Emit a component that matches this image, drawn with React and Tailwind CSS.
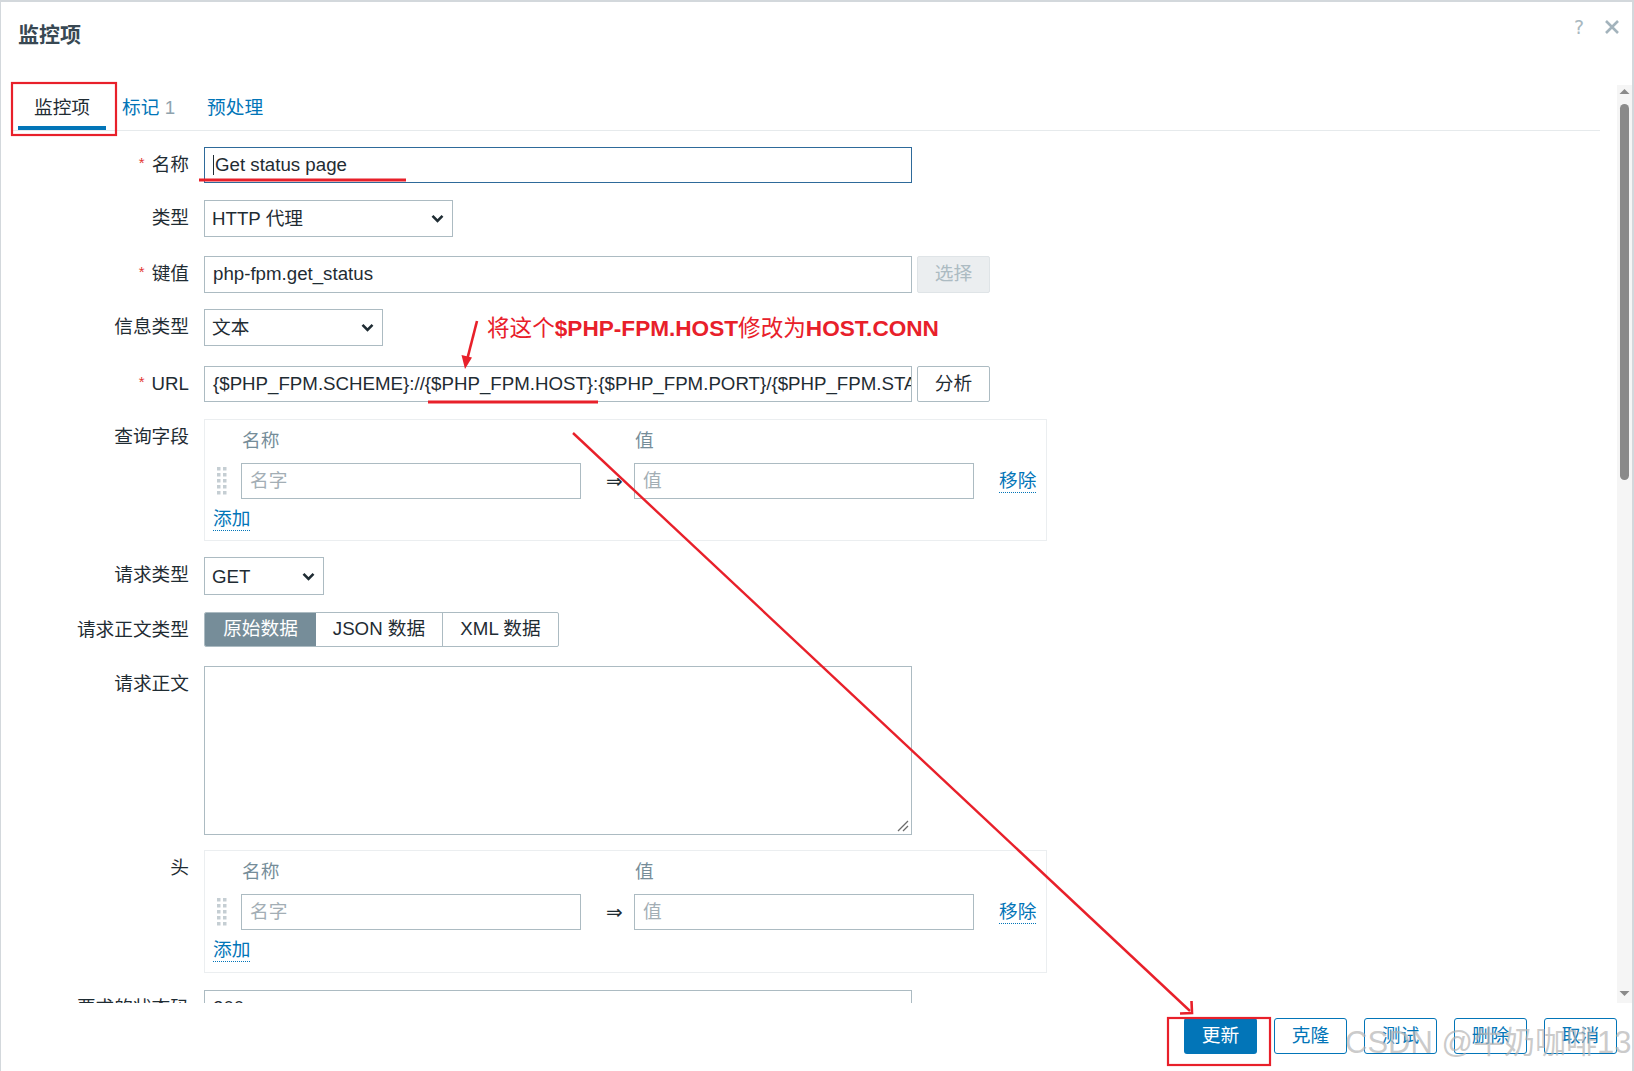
import React from "react";

const FONT = "font-['Liberation_Sans','Noto_Sans_CJK_SC',sans-serif]";

function Chevron() {
  return (
    <svg width="13" height="9" viewBox="0 0 13 9" className="shrink-0">
      <path d="M1.5 1.8 L6.5 6.8 L11.5 1.8" fill="none" stroke="#1f2c33" strokeWidth="2.6" />
    </svg>
  );
}

function Label({ children, required }) {
  return (
    <div className="w-[188px] h-[36px] flex items-center justify-end shrink-0 text-[18.7px] text-[#1f2c33] whitespace-nowrap">
      {required && <span className="text-[15px] text-[#e33734] mr-[7px] mt-[-4px]">*</span>}
      {children}
    </div>
  );
}

function Row({ label, required, mt, children }) {
  return (
    <div className={`flex items-start ${mt}`}>
      <Label required={required}>{label}</Label>
      <div className="ml-[15px]">{children}</div>
    </div>
  );
}

function Select({ w, h, text }) {
  return (
    <div className={`${w} ${h} border border-[#acbbc2] bg-white flex items-center justify-between pl-[7px] pr-[8px] text-[18.7px] text-[#1f2c33]`}>
      <span className="pt-[2px]">{text}</span>
      <Chevron />
    </div>
  );
}

function Handle() {
  const dots = [];
  for (let r = 0; r < 5; r++) {
    for (let c = 0; c < 2; c++) {
      dots.push(<rect key={`${r}-${c}`} x={c * 6} y={r * 6} width="3.5" height="3.5" fill="#c5ced3" />);
    }
  }
  return (
    <svg width="10" height="28" viewBox="0 0 10 28">
      {dots}
    </svg>
  );
}

function PairBox({ h }) {
  return (
    <div className={`w-[843px] ${h} border border-[#ebeef0] pl-[8px] pt-[10px]`}>
      <div className="flex h-[22px] leading-[22px] text-[18.7px] text-[#768d99]">
        <div className="w-[28px]" />
        <div className="w-[340px] pl-[1px]">名称</div>
        <div className="w-[53px]" />
        <div className="pl-[1px]">值</div>
      </div>
      <div className="flex items-center mt-[11px] h-[36px]">
        <div className="w-[28px] flex items-center pl-[4px]">
          <Handle />
        </div>
        <div className="w-[340px] h-[36px] border border-[#acbbc2] flex items-center pl-[8px] text-[18.7px] text-[#a3aeb5]">名字</div>
        <div className="w-[53px] text-center text-[20px] text-[#1f2c33] font-['DejaVu_Sans',sans-serif] pl-[14px]">⇒</div>
        <div className="w-[340px] h-[36px] border border-[#acbbc2] flex items-center pl-[8px] text-[18.7px] text-[#a3aeb5]">值</div>
        <div className="ml-[25px] text-[18.7px] text-[#0275b8] leading-[22px] border-b border-dotted border-[#0275b8]">移除</div>
      </div>
      <div className="mt-[9px] flex">
        <span className="text-[18.7px] text-[#0275b8] leading-[22px] border-b border-dotted border-[#0275b8]">添加</span>
      </div>
    </div>
  );
}

function Btn({ children, primary }) {
  return (
    <div
      className={`w-[73px] h-[36px] rounded-[3px] flex items-center justify-center text-[18.7px] ${
        primary ? "bg-[#0275b8] text-white" : "bg-white border border-[#0275b8] text-[#0275b8]"
      }`}
    >
      {children}
    </div>
  );
}

export default function App() {
  return (
    <div className={`${FONT} relative w-[1634px] h-[1071px] bg-white border-t-2 border-l border-r-2 border-[#d3d8dc] overflow-hidden text-[#1f2c33]`}>
      {/* header */}
      <div className="h-[83px] flex items-start justify-between">
        <div className="pl-[17px] pt-[20px] text-[21px] font-bold text-[#384853] leading-[26px]">监控项</div>
        <div className="flex items-center pt-[11px] pr-[12px] gap-[20px]">
          <span className="text-[19px] text-[#a9b8c0] font-['DejaVu_Sans',sans-serif]">?</span>
          <svg width="16" height="16" viewBox="0 0 16 16">
            <path d="M2 2 L14 14 M14 2 L2 14" stroke="#a3b3bc" strokeWidth="2.6" />
          </svg>
        </div>
      </div>

      {/* scroll body */}
      <div className="flex h-[918px]">
        <div className="flex-1 overflow-hidden pr-[17px]">
          {/* tabs */}
          <div className="ml-[10px] flex border-b border-[#e6eaec] h-[46px] items-end">
            <div className="ml-[7px] px-[16px] h-[44px] pt-[11px] text-[18.7px] leading-[22px] text-[#1f2c33] border-b-4 border-[#0275b8]">监控项</div>
            <div className="px-[16px] h-[44px] pt-[11px] text-[18.7px] leading-[22px] text-[#0275b8]">
              标记 <span className="text-[#8fa3ae]">1</span>
            </div>
            <div className="px-[16px] h-[44px] pt-[11px] text-[18.7px] leading-[22px] text-[#0275b8]">预处理</div>
          </div>

          {/* form */}
          <div className="flex flex-col">
            <Row label="名称" required mt="mt-[16px]">
              <div className="w-[708px] h-[36px] border border-[#2e6a9a] flex items-center pl-[8px] text-[18.7px]">
                <span className="w-[1px] h-[20px] bg-[#1f2c33] mr-[1px]" />
                Get status page
              </div>
            </Row>
            <Row label="类型" mt="mt-[17px]">
              <Select w="w-[249px]" h="h-[37px]" text="HTTP 代理" />
            </Row>
            <Row label="键值" required mt="mt-[19px]">
              <div className="flex items-center">
                <div className="w-[708px] h-[37px] border border-[#acbbc2] flex items-center pl-[8px] text-[18.7px]">php-fpm.get_status</div>
                <div className="ml-[5px] w-[73px] h-[37px] rounded-[2px] bg-[#ebeef0] border border-[#dfe4e7] flex items-center justify-center text-[18.7px] text-[#acbbc2]">选择</div>
              </div>
            </Row>
            <Row label="信息类型" mt="mt-[16px]">
              <Select w="w-[179px]" h="h-[37px]" text="文本" />
            </Row>
            <Row label="URL" required mt="mt-[20px]">
              <div className="flex items-center">
                <div className="w-[708px] h-[36px] border border-[#acbbc2] flex items-center pl-[8px] pr-[6px] text-[18.7px] overflow-hidden whitespace-nowrap">
                  {"{$PHP_FPM.SCHEME}://{$PHP_FPM.HOST}:{$PHP_FPM.PORT}/{$PHP_FPM.STATUS.PAGE}"}
                </div>
                <div className="ml-[5px] w-[73px] h-[36px] rounded-[2px] bg-white border border-[#acbbc2] flex items-center justify-center text-[18.7px]">分析</div>
              </div>
            </Row>
            <Row label="查询字段" mt="mt-[17px]">
              <PairBox h="h-[122px]" />
            </Row>
            <Row label="请求类型" mt="mt-[16px]">
              <Select w="w-[120px]" h="h-[38px]" text="GET" />
            </Row>
            <Row label="请求正文类型" mt="mt-[17px]">
              <div className="flex h-[35px] text-[18.7px] rounded-[2px] overflow-hidden border border-[#acbbc2]">
                <div className="w-[111px] bg-[#768d99] text-white flex items-center justify-center">原始数据</div>
                <div className="w-[127px] border-r border-[#acbbc2] flex items-center justify-center">JSON 数据</div>
                <div className="w-[115px] flex items-center justify-center">XML 数据</div>
              </div>
            </Row>
            <Row label="请求正文" mt="mt-[18px]">
              <div className="relative w-[708px] h-[169px] border border-[#acbbc2]">
                <svg className="absolute right-[2px] bottom-[2px]" width="12" height="12" viewBox="0 0 12 12">
                  <path d="M1 11 L11 1 M6 11 L11 6" stroke="#6b6b6b" strokeWidth="1.3" />
                </svg>
              </div>
            </Row>
            <Row label="头" mt="mt-[15px]">
              <PairBox h="h-[123px]" />
            </Row>
            <Row label="要求的状态码" mt="mt-[17px]">
              <div className="w-[708px] h-[36px] border border-[#acbbc2] flex items-center pl-[8px] text-[18.7px]">200</div>
            </Row>
          </div>
        </div>

        {/* scrollbar */}
        <div className="w-[15px] bg-[#f5f5f5] flex flex-col items-center pt-[3px] pb-[6px]">
          <svg width="11" height="7" viewBox="0 0 11 7">
            <path d="M0.5 6 L5.5 1 L10.5 6 Z" fill="#8a8a8a" />
          </svg>
          <div className="mt-[9px] w-[9px] h-[376px] rounded-full bg-[#8a8a8a]" />
          <div className="flex-1" />
          <svg width="11" height="7" viewBox="0 0 11 7">
            <path d="M0.5 1 L5.5 6 L10.5 1 Z" fill="#8a8a8a" />
          </svg>
        </div>
      </div>

      {/* footer */}
      <div className="flex justify-end gap-[17px] pr-[15px] pt-[15px]">
        <Btn primary>更新</Btn>
        <Btn>克隆</Btn>
        <Btn>测试</Btn>
        <Btn>删除</Btn>
        <Btn>取消</Btn>
      </div>

      {/* annotation text */}
      <div className="absolute left-[486px] top-[313px] text-[22.6px] leading-[28px] text-[#e8202a] whitespace-nowrap font-['Liberation_Sans','Noto_Sans_CJK_SC',sans-serif]">
        将这个<span className="font-bold">$PHP-FPM.HOST</span>修改为<span className="font-bold">HOST.CONN</span>
      </div>

      {/* watermark */}
      <div className="absolute left-[1344px] top-[1021px] text-[31px] leading-[40px] text-[#b4b4b4]/70 whitespace-nowrap font-['Liberation_Sans','Noto_Sans_CJK_SC',sans-serif]">
        CSDN @牛奶咖啡13
      </div>

      {/* red annotations */}
      <svg className="absolute left-0 top-0 pointer-events-none" width="1634" height="1071" viewBox="0 0 1634 1071">
        <rect x="11" y="81" width="104" height="52" fill="none" stroke="#e8202a" strokeWidth="2.2" />
        <rect x="1167" y="1016" width="102" height="47" fill="none" stroke="#e8202a" strokeWidth="2.2" />
        <line x1="198" y1="178" x2="405" y2="178" stroke="#e8202a" strokeWidth="2.8" />
        <line x1="427" y1="400" x2="597" y2="400" stroke="#e8202a" strokeWidth="2.8" />
        <line x1="476" y1="319" x2="466" y2="358" stroke="#e8202a" strokeWidth="2.6" />
        <polygon points="464,367 460.5,353 471,355.5" fill="#e8202a" />
        <line x1="572" y1="431" x2="1189" y2="1009" stroke="#e8202a" strokeWidth="2.4" />
        <polyline points="1179,1011.5 1191,1011 1190.5,999" fill="none" stroke="#e8202a" strokeWidth="2.6" />
      </svg>
    </div>
  );
}
